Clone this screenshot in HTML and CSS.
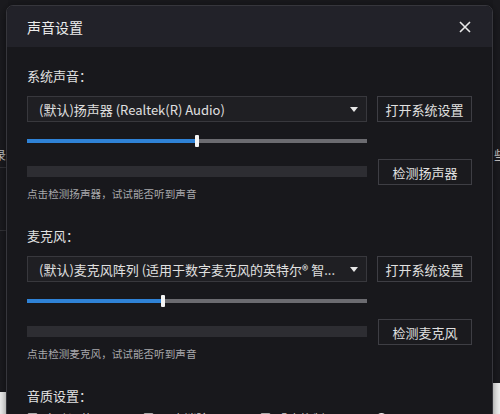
FILE: index.html
```html
<!DOCTYPE html>
<html lang="zh-CN">
<head>
<meta charset="UTF-8" />
<title>声音设置</title>
<link rel="stylesheet" href="styles.css">
</head>
<body>
  <div class="backdrop">
    <div class="bg-left">
      <span class="bg-glyph">录</span>
      <div class="bg-line l1"></div>
      <div class="bg-line l2"></div>
    </div>
    <div class="bg-right">
      <span class="bg-glyph">些</span>
    </div>
  </div>

  <div class="dialog" role="dialog" aria-label="声音设置">
    <div class="dialog-header">
      <span class="dialog-title">声音设置</span>
      <button class="close-btn" aria-label="关闭">
        <svg width="12" height="12" viewBox="0 0 12 12"><path d="M1 1L11 11M11 1L1 11" stroke="#e8e8e8" stroke-width="1.6" fill="none"/></svg>
      </button>
    </div>

    <div class="dialog-body">
      <section class="group">
        <div class="group-label">系统声音：</div>
        <div class="row">
          <div class="select">
            <span class="select-text">(默认)扬声器 (Realtek(R) Audio)</span>
            <span class="caret"></span>
          </div>
          <button class="btn">打开系统设置</button>
        </div>
        <div class="slider">
          <div class="slider-fill" style="width: 50%"></div>
          <div class="slider-thumb" style="left: 50%"></div>
        </div>
        <div class="row test-row">
          <div class="test-col">
            <div class="level"></div>
            <div class="hint">点击检测扬声器，试试能否听到声音</div>
          </div>
          <button class="btn">检测扬声器</button>
        </div>
      </section>

      <section class="group">
        <div class="group-label">麦克风：</div>
        <div class="row">
          <div class="select">
            <span class="select-text">(默认)麦克风阵列 (适用于数字麦克风的英特尔® 智...</span>
            <span class="caret"></span>
          </div>
          <button class="btn">打开系统设置</button>
        </div>
        <div class="slider">
          <div class="slider-fill" style="width: 40%"></div>
          <div class="slider-thumb" style="left: 40%"></div>
        </div>
        <div class="row test-row">
          <div class="test-col">
            <div class="level"></div>
            <div class="hint">点击检测麦克风，试试能否听到声音</div>
          </div>
          <button class="btn">检测麦克风</button>
        </div>
      </section>

      <section class="group">
        <div class="group-label">音质设置：</div>
        <div class="options">
          <span class="opt"><i class="box"></i>自动调节</span>
          <span class="opt"><i class="box"></i>回声消除</span>
          <span class="opt"><i class="box"></i>噪音抑制</span>
          <span class="opt"><i class="radio"></i></span>
        </div>
      </section>
    </div>
  </div>
</body>
</html>
```

FILE: styles.css
```css
* {
  box-sizing: border-box;
}
html, body {
  margin: 0;
  height: 100%;
  overflow: hidden;
}
body {
  background: #19191d;
  font-family: "Noto Sans CJK SC", "Noto Sans", sans-serif;
  color: #dcdcdc;
  position: relative;
}

/* page behind the dialog */
.backdrop {
  height: 100%;
  display: flex;
  justify-content: space-between;
}
.bg-left, .bg-right {
  width: 8px;
  height: 100%;
  position: relative;
  overflow: hidden;
}
.bg-left {
  background: linear-gradient(#1b1b1f 0, #1b1b1f 392px, #f4f4f4 392px);
}
.bg-right {
  width: 7px;
  background: linear-gradient(#1b1b1f 0, #1b1b1f 383px, #f4f4f4 383px);
}
.bg-glyph {
  position: absolute;
  top: 146px;
  font-size: 12px;
  color: #c8c8c8;
}
.bg-left .bg-glyph {
  left: -6px;
}
.bg-right .bg-glyph {
  left: 1px;
}
.bg-line {
  position: absolute;
  left: 0;
  right: 0;
  height: 1px;
  background: #333338;
}
.bg-line.l1 { top: 167px; }
.bg-line.l2 { top: 230px; }

/* dialog */
.dialog {
  position: absolute;
  left: 6px;
  top: 5px;
  width: 487px;
  height: 430px;
  background: #18181c;
  border: 1px solid #36363c;
  border-radius: 7px;
  overflow: hidden;
  box-shadow: 0 2px 10px rgba(0,0,0,0.5);
}
.dialog-header {
  height: 41px;
  background: #222229;
  display: flex;
  align-items: center;
  justify-content: space-between;
  padding: 0 20px;
}
.dialog-title {
  font-size: 14px;
  color: #ececec;
}
.close-btn {
  background: none;
  border: none;
  padding: 0;
  width: 14px;
  height: 14px;
  display: flex;
  align-items: center;
  justify-content: center;
}

.dialog-body {
  padding: 20px 20px 0 20px;
  display: flex;
  flex-direction: column;
}
.group {
  margin-bottom: 25px;
}
.group-label {
  font-size: 13px;
  line-height: 18px;
  color: #e2e2e2;
  margin-bottom: 11px;
}
.row {
  display: flex;
  gap: 10px;
  align-items: flex-start;
}
.select {
  width: 340px;
  height: 26px;
  background: #1f1f23;
  border: 1px solid #38383d;
  display: flex;
  align-items: center;
  justify-content: space-between;
  padding: 0 8px 0 11px;
}
.select-text {
  font-size: 13px;
  color: #e0e0e0;
  white-space: nowrap;
}
.caret {
  width: 0;
  height: 0;
  border-left: 4px solid transparent;
  border-right: 4px solid transparent;
  border-top: 5px solid #e6e6e6;
}
.btn {
  width: 95px;
  height: 26px;
  background: #1a1a1e;
  border: 1px solid #3e3e44;
  color: #e0e0e0;
  font-family: inherit;
  font-size: 13px;
  padding: 0;
}

.slider {
  width: 340px;
  height: 4px;
  background: #6b6b70;
  margin-top: 17px;
  position: relative;
}
.slider-fill {
  height: 100%;
  background: #2f82d6;
}
.slider-thumb {
  position: absolute;
  top: -4px;
  width: 4px;
  height: 12px;
  margin-left: -2px;
  background: #f4f4f4;
  border-radius: 1px;
}

.test-row {
  margin-top: 16px;
}
.test-col {
  width: 340px;
  padding-top: 7px;
}
.level {
  height: 11px;
  background: #2d2d32;
}
.hint {
  font-size: 10.6px;
  color: #a8a8ac;
  margin-top: 9px;
  line-height: 16px;
}
.test-row .btn {
  width: 94px;
  margin-left: 1px;
}

.options {
  display: flex;
  gap: 20px;
  font-size: 12px;
  color: #ccc;
  margin-top: -6px;
}
.opt {
  display: flex;
  align-items: center;
  gap: 6px;
  width: 110px;
}
.box {
  width: 11px;
  height: 11px;
  border: 1px solid #aaa;
  border-radius: 2px;
}
.radio {
  width: 11px;
  height: 11px;
  border-radius: 50%;
  background: #eee;
}
```
